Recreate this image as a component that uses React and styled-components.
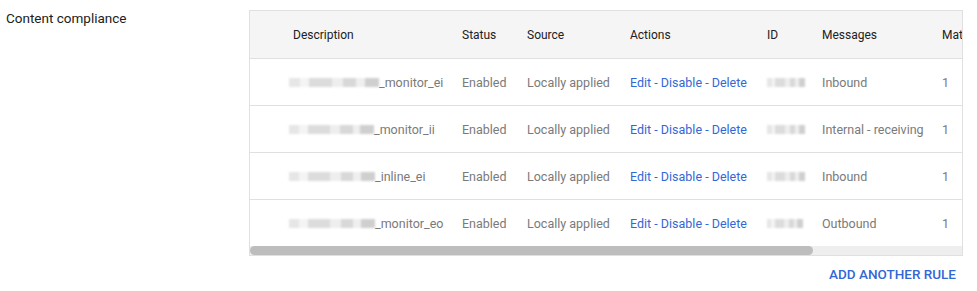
import React from 'react';
import styled, { createGlobalStyle } from 'styled-components';

const GlobalStyle = createGlobalStyle`
  body {
    margin: 0;
    background: #fff;
    font-family: Roboto, 'Liberation Sans', Arial, sans-serif;
    -webkit-font-smoothing: antialiased;
  }
`;

const Page = styled.div`
  display: flex;
  align-items: flex-start;
  padding: 10px 14px 0 6px;
`;

const Label = styled.div`
  width: 243px;
  flex-shrink: 0;
  font-size: 13.5px;
  color: #212121;
`;

const Panel = styled.div`
  width: 714px;
  display: flex;
  flex-direction: column;
  align-items: flex-end;
`;

const Frame = styled.div`
  width: 100%;
  box-sizing: border-box;
  border: 1px solid #e0e0e0;
  overflow: hidden;
`;

const Viewport = styled.div`
  overflow: hidden;
`;

const Table = styled.table`
  border-collapse: collapse;
  table-layout: fixed;
  width: 900px;
  font-size: 12.5px;
`;

const Col = styled.col`
  width: ${p => p.w}px;
`;

const HeadCell = styled.th`
  height: 47px;
  padding: 0;
  text-align: left;
  font-size: 12px;
  font-weight: 400;
  color: #212121;
  background: #f5f5f5;
  white-space: nowrap;
  overflow: hidden;
`;

const Row = styled.tr`
  border-top: 1px solid #e0e0e0;
`;

const Cell = styled.td`
  height: 46px;
  padding: 0;
  color: #7a7a7a;
  white-space: nowrap;
`;

const Action = styled.a`
  color: #3367d6;
  text-decoration: none;
`;

const Dash = styled.span`
  color: #3367d6;
`;

const Redacted = styled.span`
  display: inline-block;
  vertical-align: middle;
  width: ${p => p.w}px;
  height: 9px;
  margin-top: -2px;
  margin-left: ${p => p.shift || 0}px;
  background: linear-gradient(
    90deg,
    #e6e6e6 0 12%,
    #f4f4f4 12% 22%,
    #dcdcdc 22% 48%,
    #eeeeee 48% 60%,
    #d8d8d8 60% 75%,
    #efefef 75% 84%,
    #cfcfcf 84%
  );
  filter: blur(0.8px);
`;

const ScrollTrack = styled.div`
  height: 9px;
  background: #eeeeee;
`;

const ScrollThumb = styled.div`
  height: 100%;
  border-radius: 5px;
  background: #bdbdbd;
`;

const AddButton = styled.button`
  margin-top: 10px;
  margin-right: 7px;
  padding: 0;
  border: 0;
  background: none;
  font-family: inherit;
  font-size: 13.5px;
  font-weight: 500;
  color: #3367d6;
  text-transform: uppercase;
  cursor: pointer;
`;

const rules = [
  { pre: 90, name: '_monitor_ei', id: 38, messages: 'Inbound' },
  { pre: 85, name: '_monitor_ii', id: 38, messages: 'Internal - receiving' },
  { pre: 86, name: '_inline_ei', id: 38, messages: 'Inbound' },
  { pre: 86, name: '_monitor_eo', id: 36, messages: 'Outbound' },
];

const widths = [43, 169, 65, 103, 137, 55, 120, 208];
const visible = 712;
const total = widths.reduce((a, b) => a + b, 0);

export default function App() {
  return (
    <>
      <GlobalStyle />
      <Page>
        <Label>Content compliance</Label>
        <Panel>
          <Frame>
            <Viewport>
              <Table>
                <colgroup>
                  {widths.map((w, i) => (
                    <Col key={i} w={w} />
                  ))}
                </colgroup>
                <thead>
                  <tr>
                    <HeadCell />
                    <HeadCell>Description</HeadCell>
                    <HeadCell>Status</HeadCell>
                    <HeadCell>Source</HeadCell>
                    <HeadCell>Actions</HeadCell>
                    <HeadCell>ID</HeadCell>
                    <HeadCell>Messages</HeadCell>
                    <HeadCell>Matches</HeadCell>
                  </tr>
                </thead>
                <tbody>
                  {rules.map((r, i) => (
                    <Row key={i}>
                      <Cell />
                      <Cell>
                        <Redacted w={r.pre} shift={-4} />
                        {r.name}
                      </Cell>
                      <Cell>Enabled</Cell>
                      <Cell>Locally applied</Cell>
                      <Cell>
                        <Action>Edit</Action> <Dash>-</Dash> <Action>Disable</Action>{' '}
                        <Dash>-</Dash> <Action>Delete</Action>
                      </Cell>
                      <Cell>
                        <Redacted w={r.id} />
                      </Cell>
                      <Cell>{r.messages}</Cell>
                      <Cell>1</Cell>
                    </Row>
                  ))}
                </tbody>
              </Table>
            </Viewport>
            <ScrollTrack>
              <ScrollThumb style={{ width: `${(visible / total) * 100}%` }} />
            </ScrollTrack>
          </Frame>
          <AddButton>Add another rule</AddButton>
        </Panel>
      </Page>
    </>
  );
}
